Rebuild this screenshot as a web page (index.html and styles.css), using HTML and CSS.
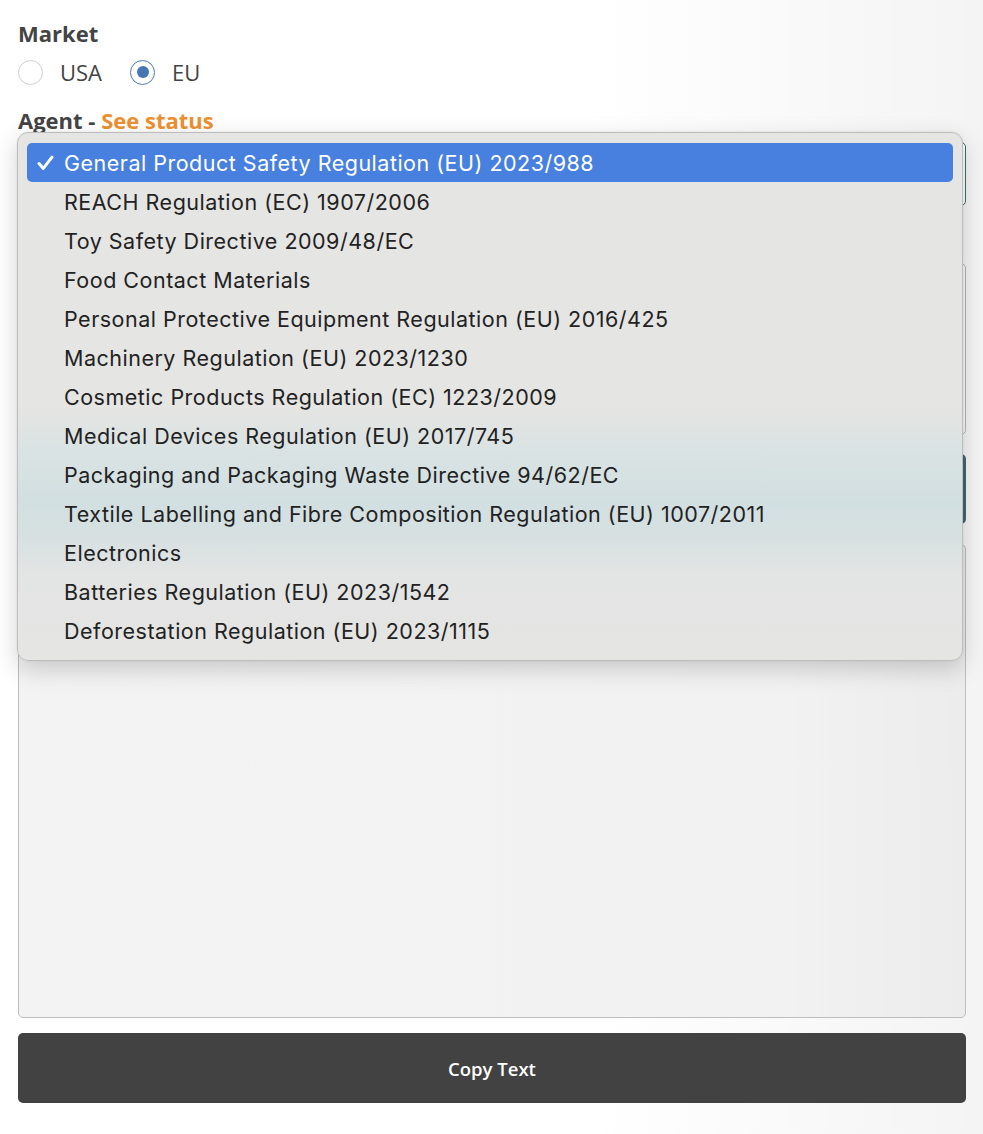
FILE: index.html
```html
<!DOCTYPE html>
<html lang="en">
<head>
<meta charset="utf-8">
<title>Agent</title>
<link rel="stylesheet" href="styles.css">
</head>
<body>
<div class="page">
  <div class="field-label">Market</div>
  <div class="radios">
    <label class="radio"><span class="dot"></span><span class="radio-text">USA</span></label>
    <label class="radio"><span class="dot checked"></span><span class="radio-text">EU</span></label>
  </div>
  <div class="field-label agent">Agent - <span class="status">See status</span></div>
  <div class="select-box"></div>
  <div class="spacer-label"></div>
  <div class="info-box"></div>
  <div class="teal-btn"></div>
  <div class="textarea"></div>
  <button class="copy-btn">Copy Text</button>

  <div class="menu">
    <div class="item selected"><svg class="check" width="17" height="16" viewBox="0 0 17 16"><path d="M2 8.6 L6.3 13.4 L15 2.2" fill="none" stroke="#fff" stroke-width="3" stroke-linecap="round" stroke-linejoin="round"/></svg>General Product Safety Regulation (EU) 2023/988</div>
    <div class="item">REACH Regulation (EC) 1907/2006</div>
    <div class="item">Toy Safety Directive 2009/48/EC</div>
    <div class="item">Food Contact Materials</div>
    <div class="item">Personal Protective Equipment Regulation (EU) 2016/425</div>
    <div class="item">Machinery Regulation (EU) 2023/1230</div>
    <div class="item">Cosmetic Products Regulation (EC) 1223/2009</div>
    <div class="item">Medical Devices Regulation (EU) 2017/745</div>
    <div class="item">Packaging and Packaging Waste Directive 94/62/EC</div>
    <div class="item">Textile Labelling and Fibre Composition Regulation (EU) 1007/2011</div>
    <div class="item">Electronics</div>
    <div class="item">Batteries Regulation (EU) 2023/1542</div>
    <div class="item">Deforestation Regulation (EU) 2023/1115</div>
  </div>
</div>
</body>
</html>
```

FILE: styles.css
```css
html, body {
  margin: 0;
  padding: 0;
}
body {
  background: linear-gradient(90deg, #ffffff 0%, #ffffff 60%, #f4f4f4 100%);
  font-family: "Open Sans", "Liberation Sans", sans-serif;
  color: #444;
  min-height: 1134px;
}
.page {
  position: relative;
  padding: 19px 17px 0 18px;
  display: flex;
  flex-direction: column;
}
.field-label {
  font-weight: 700;
  font-size: 22px;
  line-height: 28px;
  color: #444;
}
.radios {
  display: flex;
  gap: 28px;
  margin-top: 11px;
  height: 28px;
  align-items: center;
}
.radio {
  display: flex;
  align-items: center;
  gap: 17px;
}
.dot {
  width: 23px;
  height: 23px;
  border: 1px solid #cfcfcf;
  border-radius: 50%;
  background: #fff;
  box-sizing: content-box;
  position: relative;
}
.dot.checked {
  border-color: #4a7ab8;
}
.dot.checked::after {
  content: "";
  position: absolute;
  left: 5.5px;
  top: 5.5px;
  width: 12px;
  height: 12px;
  border-radius: 50%;
  background: #4677b4;
}
.radio-text {
  font-size: 22px;
  color: #444;
}
.agent {
  margin-top: 20px;
}
.status {
  color: #ec9030;
}
.select-box {
  margin-top: 8px;
  height: 62px;
  border: 1px solid #3f6870;
  border-radius: 5px;
  background: #fff;
}
.spacer-label {
  height: 57px;
}
.info-box {
  height: 170px;
  border: 1px solid #b5b5b5;
  border-radius: 5px;
  background: #fafafa;
}
.teal-btn {
  margin-top: 19px;
  height: 70px;
  border-radius: 5px;
  background: #3f6870;
}
.textarea {
  margin-top: 20px;
  height: 472px;
  border: 1px solid #bdbdbd;
  border-radius: 5px;
  background: linear-gradient(90deg, #f3f3f3 0%, #f2f2f2 80%, #ececec 100%);
}
.copy-btn {
  margin-top: 15px;
  height: 70px;
  border: none;
  border-radius: 5px;
  background: #424242;
  color: #fff;
  font-family: "Open Sans", "Liberation Sans", sans-serif;
  font-weight: 600;
  font-size: 18.5px;
  padding: 0;
}
.menu {
  position: absolute;
  left: 17px;
  top: 132px;
  width: 946px;
  box-sizing: border-box;
  padding: 10px 9px;
  border: 1px solid #bdbdbd;
  border-radius: 11px;
  background: linear-gradient(180deg, #e5e5e3 0%, #e5e5e3 52%, #dae3e3 60%, #d2dfe1 70%, #d6e0e1 76%, #e3e5e4 84%, #e5e5e3 100%);
  box-shadow: 0 8px 24px rgba(0,0,0,0.18), 0 0 2px rgba(0,0,0,0.08);
  font-family: Inter, "Noto Sans", sans-serif;
  font-size: 21.5px;
  letter-spacing: 0.5px;
  color: #222;
}
.item {
  height: 39px;
  line-height: 41px;
  padding-left: 37px;
  border-radius: 5px;
  position: relative;
  white-space: nowrap;
}
.item.selected {
  background: #4780df;
  color: #fff;
}
.check {
  position: absolute;
  left: 10px;
  top: 12px;
}
```
